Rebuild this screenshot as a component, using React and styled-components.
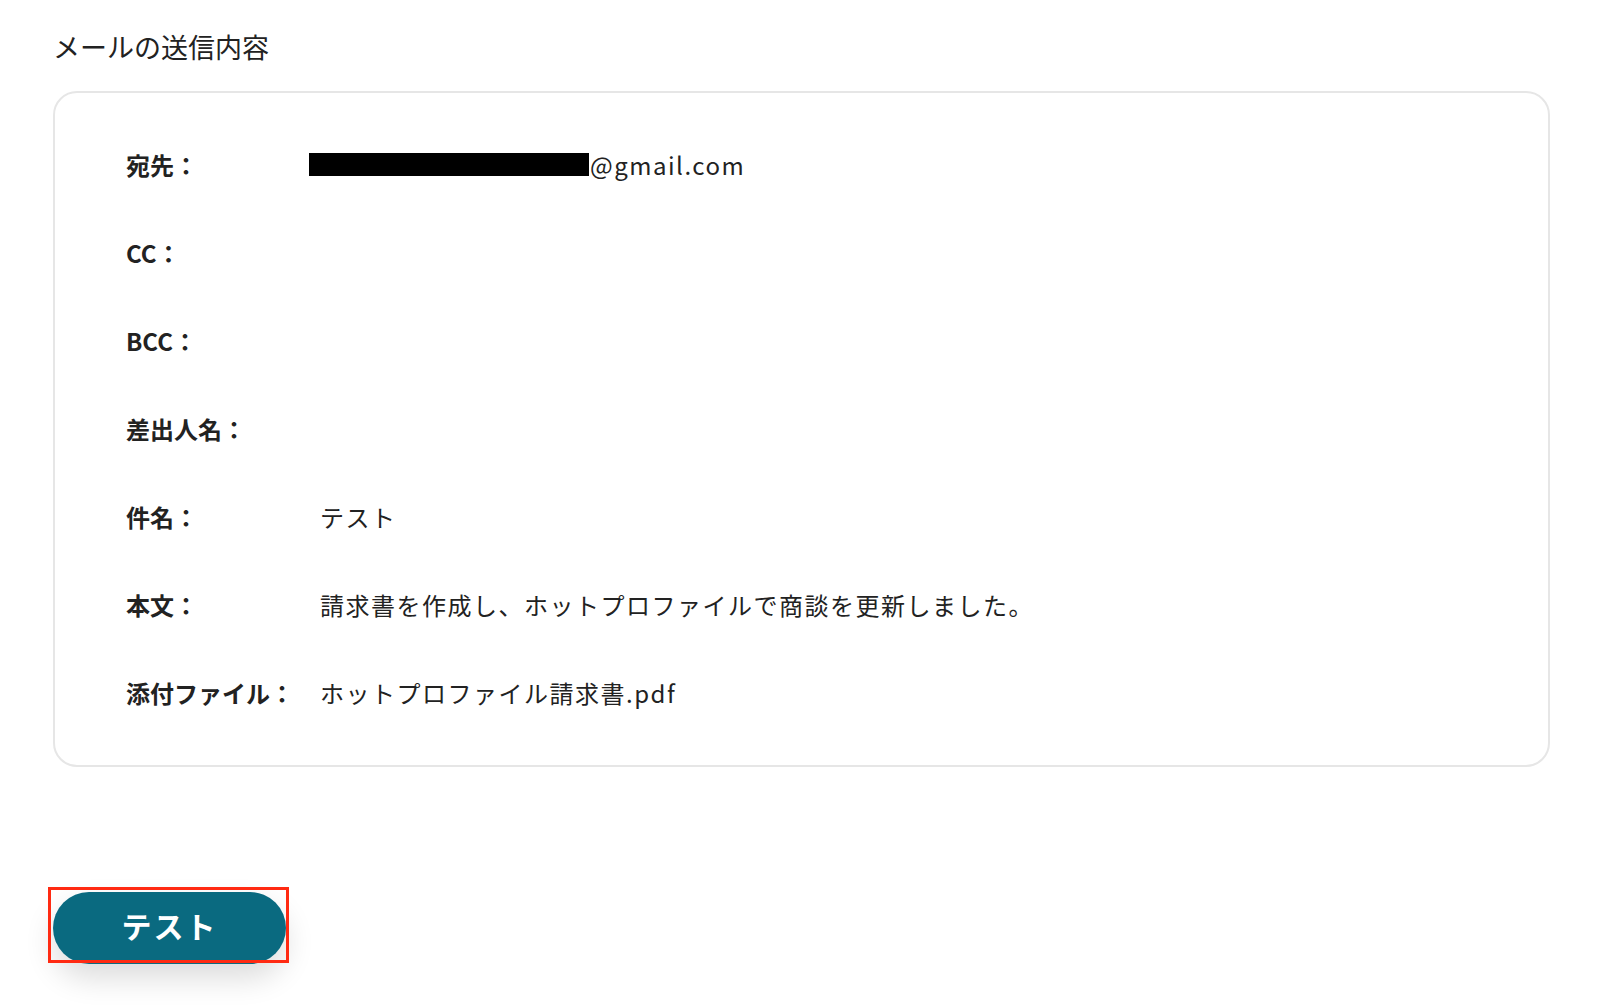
import React from "react";
import styled, { createGlobalStyle } from "styled-components";

const GlobalStyle = createGlobalStyle`
  html, body {
    margin: 0;
    padding: 0;
    background: #ffffff;
  }
  body {
    font-family: "Noto Sans CJK JP", "Noto Sans", sans-serif;
    color: #222222;
  }
`;

const rows = [
  { label: "宛先：", value: "@gmail.com", redacted: true },
  { label: "CC：", value: "" },
  { label: "BCC：", value: "" },
  { label: "差出人名：", value: "" },
  { label: "件名：", value: "テスト" },
  { label: "本文：", value: "請求書を作成し、ホットプロファイルで商談を更新しました。" },
  { label: "添付ファイル：", value: "ホットプロファイル請求書.pdf" },
];

const App = () => {
  return (
    <>
      <GlobalStyle />
      <Page>
        <Title>メールの送信内容</Title>
        <Card>
          {rows.map((row) => (
            <Row key={row.label}>
              <Label>{row.label}</Label>
              <Value>
                {row.redacted && <Redaction />}
                {row.value}
              </Value>
            </Row>
          ))}
        </Card>
        <ButtonArea>
          <TestButton type="button">テスト</TestButton>
          <Highlight />
        </ButtonArea>
      </Page>
    </>
  );
};

export default App;

const Page = styled.div`
  display: flex;
  flex-direction: column;
  align-items: flex-start;
  padding: 27px 50px 0 53px;
  min-height: 1005px;
  box-sizing: border-box;
`;

const Title = styled.h2`
  margin: 0;
  font-size: 27px;
  font-weight: 400;
  line-height: 40px;
  color: #222222;
`;

const Card = styled.div`
  box-sizing: border-box;
  width: 1497px;
  margin-top: 24px;
  padding: 54px 71px 54px;
  border: 2px solid #e6e6e6;
  border-radius: 24px;
  display: flex;
  flex-direction: column;
  gap: 52px;
`;

const Row = styled.div`
  display: grid;
  grid-template-columns: 194px 1fr;
  align-items: center;
  height: 36px;
`;

const Label = styled.div`
  font-size: 24px;
  font-weight: 700;
  line-height: 36px;
  color: #222222;
  white-space: nowrap;
`;

const Value = styled.div`
  display: flex;
  align-items: center;
  font-size: 24px;
  font-weight: 400;
  line-height: 36px;
  letter-spacing: 1.5px;
  color: #222222;
  white-space: nowrap;
`;

const Redaction = styled.span`
  display: inline-block;
  width: 280px;
  height: 23px;
  margin-left: -11px;
  margin-right: 1px;
  margin-top: -2px;
  background: #000000;
`;

const ButtonArea = styled.div`
  position: relative;
  margin-top: 125px;
`;

const TestButton = styled.button`
  display: flex;
  align-items: center;
  justify-content: center;
  width: 233px;
  height: 72px;
  padding: 0 0 6px;
  border: none;
  border-radius: 36px;
  background: #0a6a80;
  color: #ffffff;
  font-family: "Noto Sans CJK JP", "Noto Sans", sans-serif;
  font-size: 30px;
  font-weight: 700;
  letter-spacing: 2px;
  box-shadow: 0 14px 30px rgba(0, 0, 0, 0.14);
  cursor: pointer;
`;

const Highlight = styled.div`
  position: absolute;
  left: -5px;
  top: -5px;
  width: 241px;
  height: 76px;
  box-sizing: border-box;
  border: 3px solid #ff2a12;
  pointer-events: none;
`;
